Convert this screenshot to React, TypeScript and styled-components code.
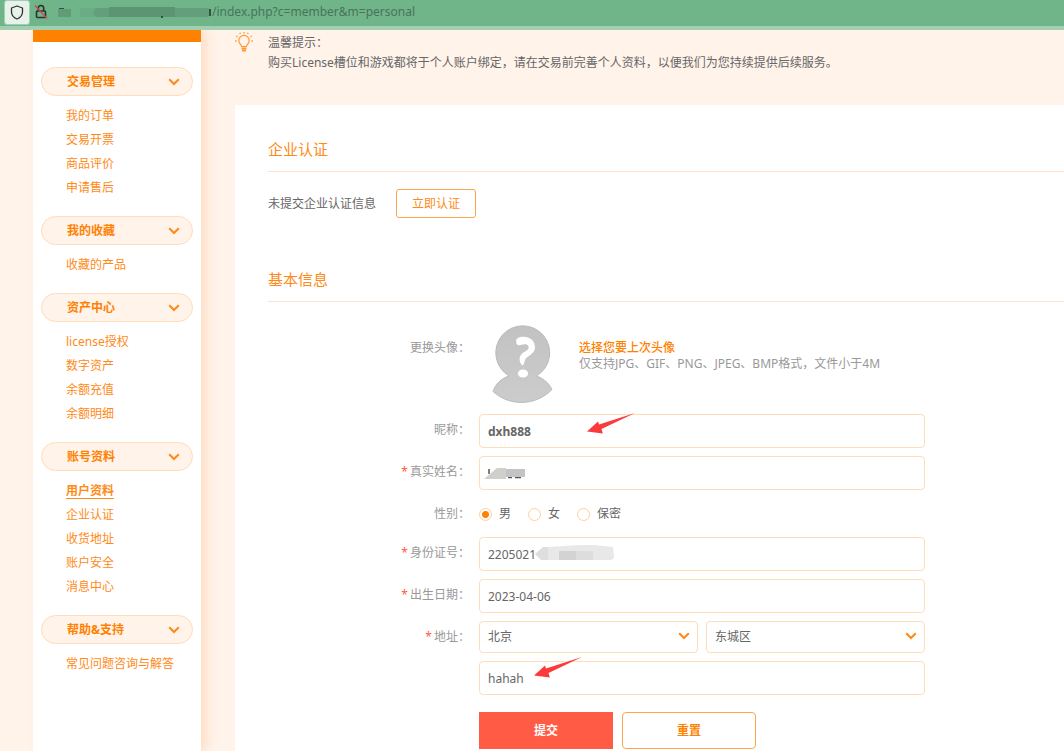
import React from "react";
import styled, { createGlobalStyle, css } from "styled-components";

const c = {
  orange: "#ff8100",
  orangeText: "#ff8a17",
  peach: "#fff3ea",
  line: "#ffdcba",
  text: "#666666",
  muted: "#999999",
  red: "#ff5b45",
};

const Global = createGlobalStyle`
  * { box-sizing: border-box; }
  body {
    margin: 0;
    background: ${c.peach};
    color: ${c.text};
    font: 12px/20px "Noto Sans", "Noto Sans CJK SC", sans-serif;
  }
  button, input, select { font: inherit; color: inherit; }
  a { color: inherit; text-decoration: none; }
`;

const Page = styled.div`
  display: flex;
  flex-direction: column;
  min-height: 100vh;
`;

const AddressBar = styled.header`
  position: relative;
  z-index: 1;
  display: flex;
  align-items: center;
  height: 30px;
  padding: 0 0 2px 4px;
  background: #70b489;
  border-bottom: 4px solid #a0cfb2;
`;

const ShieldButton = styled.button`
  display: grid;
  place-items: center;
  width: 26px;
  height: 25px;
  padding: 0;
  border: 1px solid #9fd0b2;
  border-radius: 3px;
  background: #e6f2ea;
`;

const LockIcon = styled.svg`
  margin-left: 4px;
`;

const HostSmudge = styled.svg`
  margin-left: 8px;
`;

const Url = styled.span`
  font-size: 12px;
  color: #47745a;
`;

const Columns = styled.div`
  display: flex;
  flex: 1;
`;

const Sidebar = styled.nav`
  flex: none;
  width: 168px;
  margin-left: 33px;
  padding: 0 8px;
  background: #fff;
  border-top: 12px solid ${c.orange};
  box-shadow: 6px 0 10px #fee0c8;
`;

const Group = styled.section`
  padding-top: 25px;
  & + & { padding-top: 16px; }
`;

const Pill = styled.button`
  display: flex;
  align-items: center;
  justify-content: space-between;
  width: 100%;
  height: 29px;
  padding: 0 12px 0 25px;
  border: 1px solid ${c.line};
  border-radius: 15px;
  background: ${c.peach};
  color: ${c.orange};
  font-weight: 700;
`;

const Items = styled.ul`
  list-style: none;
  margin: 0;
  padding: 8px 0 0 25px;
`;

const Item = styled.li`
  height: 24px;
  line-height: 24px;
  color: ${c.orangeText};
`;

const ItemLink = styled.a<{ $active?: boolean }>`
  ${(p) =>
    p.$active &&
    css`
      font-weight: 700;
      text-decoration: underline;
      text-underline-offset: 3px;
    `}
`;

const Main = styled.main`
  display: flex;
  flex-direction: column;
  flex: 1;
  min-width: 0;
  padding-left: 34px;
`;

const Notice = styled.div`
  display: flex;
  gap: 15px;
  height: 75px;
  padding-top: 2px;
  line-height: 20px;
`;

const NoticeText = styled.p`
  margin: 0;
  padding-top: 1px;
`;

const Panel = styled.div`
  flex: 1;
  padding: 29px 0 2px 33px;
  background: #fff;
`;

const Title = styled.h2`
  margin: 0;
  padding-bottom: 7px;
  border-bottom: 1px solid #ffe3c9;
  color: ${c.orangeText};
  font-size: 15px;
  font-weight: 400;
  line-height: 30px;
`;

const Status = styled.div`
  display: flex;
  align-items: center;
  gap: 20px;
  padding: 17px 0 46px;
`;

const OutlineButton = styled.button`
  width: 80px;
  height: 29px;
  padding: 0;
  border: 1px solid #ffa64d;
  border-radius: 3px;
  background: #fff;
  color: ${c.orangeText};
`;

const Form = styled.form`
  display: grid;
  row-gap: 8px;
  padding-top: 18px;
`;

const Row = styled.div<{ $h?: number }>`
  display: grid;
  grid-template-columns: 202px minmax(0, 446px);
  column-gap: 9px;
  height: ${(p) => p.$h ?? 34}px;
`;

const labelStyle = css`
  color: ${c.muted};
  line-height: 32px;
  text-align: right;
`;

const Label = styled.label`
  ${labelStyle}
`;

const Caption = styled.span<{ $top?: number }>`
  ${labelStyle}
  padding-top: ${(p) => p.$top ?? 0}px;
`;

const Star = styled.span`
  margin-right: 2px;
  color: ${c.red};
`;

const Field = styled.div`
  position: relative;
  grid-column: 2;
`;

const Input = styled.input<{ $bold?: boolean }>`
  display: block;
  width: 100%;
  height: 34px;
  padding: 0 8px;
  border: 1px solid ${c.line};
  border-radius: 4px;
  background: #fff;
  font-weight: ${(p) => (p.$bold ? 700 : 400)};
`;

const Avatar = styled.div`
  display: flex;
  gap: 12px;
`;

const AvatarHelp = styled.div`
  padding-top: 20px;
  color: ${c.muted};
  line-height: 16px;
  white-space: nowrap;
`;

const AvatarLink = styled.a`
  display: block;
  color: ${c.orange};
  font-weight: 500;
`;

const Radios = styled.div`
  display: flex;
  align-items: center;
  align-self: start;
  gap: 17px;
  height: 32px;
`;

const RadioLabel = styled.label`
  display: flex;
  align-items: center;
  gap: 7px;
`;

const Radio = styled.input`
  appearance: none;
  width: 13px;
  height: 13px;
  margin: 0;
  border: 1px solid #ffcf9f;
  border-radius: 50%;
  &:checked {
    background: radial-gradient(circle, ${c.orange} 3px, #fff 4px);
  }
`;

const Selects = styled.div`
  display: grid;
  grid-template-columns: 1fr 1fr;
  gap: 8px;
`;

const SelectBox = styled.div`
  position: relative;
`;

const Select = styled.select`
  appearance: none;
  display: block;
  width: 100%;
  height: 32px;
  padding: 0 8px;
  border: 1px solid ${c.line};
  border-radius: 4px;
  background: #fff;
`;

const SelectArrow = styled.span`
  position: absolute;
  top: 0;
  right: 8px;
  display: flex;
  align-items: center;
  height: 30px;
  pointer-events: none;
`;

const Overlay = styled.svg<{ $x: number; $y: number }>`
  position: absolute;
  left: ${(p) => p.$x}px;
  top: ${(p) => p.$y}px;
  pointer-events: none;
`;

const Actions = styled.div`
  display: flex;
  gap: 9px;
  padding-top: 9px;
`;

const Action = styled.button<{ $primary?: boolean }>`
  width: 134px;
  height: 37px;
  padding: 0;
  font-weight: 700;
  border: 1px solid ${(p) => (p.$primary ? c.red : "#ffa64d")};
  border-radius: ${(p) => (p.$primary ? 0 : 4)}px;
  background: ${(p) => (p.$primary ? c.red : "#fff")};
  color: ${(p) => (p.$primary ? "#fff" : c.orange)};
`;

const Chevron = () => (
  <svg width="12" height="8" viewBox="0 0 12 8" fill="none" stroke="#ff8a17" strokeWidth="2">
    <path d="M1.2 1.2 6 6 10.8 1.2" />
  </svg>
);

const Bulb = () => (
  <svg width="18" height="20" viewBox="0 0 18 20" fill="none" stroke="#ff9a36" strokeWidth="1.2">
    <path d="M6.6 14.5c0-1.8-2.800-2.900-2.800-6a5.200 5.200 0 0 1 10.400 0c0 3.100-2.800 4.200-2.800 6z" />
    <path d="M6.500 16.400h5M7 18.500h4" strokeWidth="1.800" />
    <path d="M9 0v1.500M4.800 .8l.6 1.200M13.200 .8l-.6 1.200M1.300 4l1.200.8M16.700 4l-1.200.8M0 9h1.500M16.500 9H18" strokeWidth="1.400" />
  </svg>
);

const Pointer = ({ x, y }: { x: number; y: number }) => (
  <Overlay $x={x} $y={y} width="50" height="21" viewBox="0 0 50 21" aria-hidden="true">
    <path d="M0 18.500 11 8.500l1 3L48 0 14.500 16l1.300 4.500z" fill="#fb3b3b" />
  </Overlay>
);

const AvatarPicture = () => (
  <svg width="88" height="86" viewBox="0 0 88 86" role="img" aria-label="头像">
    <defs>
      <linearGradient id="silver" x1="0" y1="0" x2="0" y2="1">
        <stop offset="0" stopColor="#c2c2c2" />
        <stop offset="1" stopColor="#cccccc" />
      </linearGradient>
    </defs>
    <path
      d="M30 56A27 27 0 1 1 57.500 56C64.500 58.500 70 63 73 69.500C57 86 31 87 14 71.500C16.500 64 22 58.500 30 56z"
      fill="url(#silver)"
      stroke="#b2b2b2"
      strokeWidth=".8"
    />
    <path
      d="M37.500 23.500C36 19 39 16.800 44 16.800C51.500 16.800 56 21 56 27.500C56 34.500 47.500 35.500 46 40C45 42.500 45.500 44 43.500 45.500C40 42.500 39.500 37 43 33.700C46 31 50.500 30.500 49.500 26.500C48.500 23.500 45 24 42.500 24.800C40.500 25.500 38 25.500 37.500 23.500z"
      fill="#fff"
    />
    <ellipse cx="44" cy="53.500" rx="5.200" ry="4" fill="#fff" />
  </svg>
);

const menu: { title: string; items: string[] }[] = [
  { title: "交易管理", items: ["我的订单", "交易开票", "商品评价", "申请售后"] },
  { title: "我的收藏", items: ["收藏的产品"] },
  { title: "资产中心", items: ["license授权", "数字资产", "余额充值", "余额明细"] },
  { title: "账号资料", items: ["用户资料", "企业认证", "收货地址", "账户安全", "消息中心"] },
  { title: "帮助&支持", items: ["常见问题咨询与解答"] },
];

export default function App() {
  return (
    <Page>
      <Global />
      <AddressBar>
        <ShieldButton type="button" aria-label="安全">
          <svg width="14" height="15" viewBox="0 0 14 15" fill="none" stroke="#333" strokeWidth="1.300">
            <path d="M7 1 12.500 3v4c0 3.300-2.500 5.700-5.500 7-3-1.300-5.500-3.700-5.500-7V3z" strokeLinejoin="round" />
          </svg>
        </ShieldButton>
        <LockIcon width="14" height="16" viewBox="0 0 14 16" fill="none" stroke="#26352c" strokeWidth="1.600">
          <rect x="2.500" y="7" width="9" height="6.500" rx="1" />
          <path d="M4.300 7V4.200a2.700 2.700 0 0 1 5.400 0V7" />
          <path d="M1 1.500 13 14.500" stroke="#d8405a" strokeWidth="1.300" />
        </LockIcon>
        <HostSmudge width="156" height="16" viewBox="0 0 156 16" aria-hidden="true">
          <rect x="2" y="5" width="13" height="8" fill="#5f9c77" />
          <rect x="3" y="4" width="5" height="1" fill="#33513f" />
          <rect x="24" y="4" width="14" height="9" fill="#6aac83" />
          <rect x="38" y="4" width="116" height="9" rx="3" fill="#629f7a" />
          <rect x="53" y="3" width="66" height="10" fill="#5b9572" />
          <rect x="105" y="12" width="2" height="2" fill="#33513f" />
          <rect x="153" y="5" width="2" height="7" fill="#35523f" />
        </HostSmudge>
        <Url>/index.php?c=member&amp;m=personal</Url>
      </AddressBar>
      <Columns>
        <Sidebar>
          {menu.map((g) => (
            <Group key={g.title}>
              <Pill type="button">
                {g.title}
                <Chevron />
              </Pill>
              <Items>
                {g.items.map((t) => (
                  <Item key={t}>
                    <ItemLink href="#" $active={t === "用户资料"}>{t}</ItemLink>
                  </Item>
                ))}
              </Items>
            </Group>
          ))}
        </Sidebar>
        <Main>
          <Notice>
            <Bulb />
            <NoticeText>
              温馨提示：
              <br />
              购买License槽位和游戏都将于个人账户绑定，请在交易前完善个人资料，以便我们为您持续提供后续服务。
            </NoticeText>
          </Notice>
          <Panel>
            <Title>企业认证</Title>
            <Status>
              未提交企业认证信息
              <OutlineButton type="button">立即认证</OutlineButton>
            </Status>
            <Title>基本信息</Title>
            <Form onSubmit={(e) => e.preventDefault()}>
              <Row $h={86}>
                <Caption $top={12}>更换头像：</Caption>
                <Avatar>
                  <AvatarPicture />
                  <AvatarHelp>
                    <AvatarLink href="#">选择您要上次头像</AvatarLink>
                    仅支持JPG、GIF、PNG、JPEG、BMP格式，文件小于4M
                  </AvatarHelp>
                </Avatar>
              </Row>
              <Row>
                <Label htmlFor="nick">昵称：</Label>
                <Field>
                  <Input id="nick" defaultValue="dxh888" $bold />
                  <Pointer x={108} y={-1} />
                </Field>
              </Row>
              <Row>
                <Label htmlFor="name"><Star>*</Star>真实姓名：</Label>
                <Field>
                  <Input id="name" />
                  <Overlay $x={5} $y={9} width="42" height="18" viewBox="0 0 42 18" aria-hidden="true">
                    <path d="M5 4v5M24 12.500h4M31 12.500h6" stroke="#555" strokeWidth="1.500" />
                    <path d="M0 14 13 3h9v11z" fill="#cfcfcb" />
                    <rect x="22" y="4" width="19" height="8" fill="#c4c4c6" />
                  </Overlay>
                </Field>
              </Row>
              <Row $h={31}>
                <Caption>性别：</Caption>
                <Radios role="radiogroup" aria-label="性别">
                  <RadioLabel><Radio type="radio" name="sex" defaultChecked />男</RadioLabel>
                  <RadioLabel><Radio type="radio" name="sex" />女</RadioLabel>
                  <RadioLabel><Radio type="radio" name="sex" />保密</RadioLabel>
                </Radios>
              </Row>
              <Row>
                <Label htmlFor="idno"><Star>*</Star>身份证号：</Label>
                <Field>
                  <Input id="idno" defaultValue="2205021" />
                  <Overlay $x={56} $y={7} width="80" height="20" viewBox="0 0 80 20" aria-hidden="true">
                    <path d="M0 10 8 3h14v13H6z" fill="#dedede" />
                    <path d="M13 3 44 1h14l20 2 1 11-3 2H13z" fill="#e8e8e8" />
                    <rect x="24" y="7" width="17" height="9" fill="#d3d3d3" />
                    <rect x="41" y="7" width="17" height="9" fill="#dddddd" />
                  </Overlay>
                </Field>
              </Row>
              <Row>
                <Label htmlFor="birth"><Star>*</Star>出生日期：</Label>
                <Field><Input id="birth" defaultValue="2023-04-06" /></Field>
              </Row>
              <Row $h={32}>
                <Label htmlFor="province"><Star>*</Star>地址：</Label>
                <Selects>
                  <SelectBox>
                    <Select id="province"><option>北京</option></Select>
                    <SelectArrow><Chevron /></SelectArrow>
                  </SelectBox>
                  <SelectBox>
                    <Select aria-label="区"><option>东城区</option></Select>
                    <SelectArrow><Chevron /></SelectArrow>
                  </SelectBox>
                </Selects>
              </Row>
              <Row>
                <Field>
                  <Input aria-label="详细地址" defaultValue="hahah" />
                  <Pointer x={55} y={-4} />
                </Field>
              </Row>
              <Row $h={46}>
                <Field>
                  <Actions>
                    <Action type="submit" $primary>提交</Action>
                    <Action type="reset">重置</Action>
                  </Actions>
                </Field>
              </Row>
            </Form>
          </Panel>
        </Main>
      </Columns>
    </Page>
  );
}
